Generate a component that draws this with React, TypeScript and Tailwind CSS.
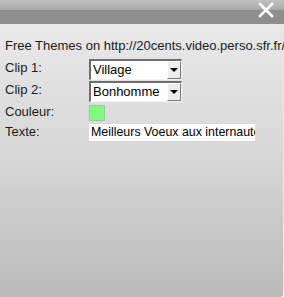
export default function App() {
  const labels = ['Clip 1:', 'Clip 2:', 'Couleur:', 'Texte:']

  return (
    <div
      className="w-[284px] h-[297px] overflow-hidden flex flex-col text-[13px] text-[#1a1a1a]"
      style={{ fontFamily: '"Liberation Sans", Arial, sans-serif' }}
    >
      <div className="h-[24px] flex flex-col relative">
        <div className="h-[10px] bg-gradient-to-b from-[#c2c2c2] to-[#a8a8a8]" />
        <div className="flex-1 bg-[#8e8e8e]" />
        <svg
          className="absolute left-[258px] top-[2px]"
          width="16"
          height="16"
          viewBox="0 0 16 16"
        >
          <path d="M2 2 L14 14 M14 2 L2 14" stroke="#fff" strokeWidth="2.6" strokeLinecap="square" />
        </svg>
      </div>

      <div className="flex-1 bg-gradient-to-b from-[#e9e9e9] via-[#d6d6d6] to-[#bababa] border-r border-r-[#efe6e6] rounded-br-[4px]">
        <div className="pl-[5px] pt-[14px] whitespace-nowrap leading-[15px]">
          Free Themes on http://20cents.video.perso.sfr.fr/
        </div>

        <div className="flex pt-[6px]">
          <div className="w-[89px] pl-[5px] flex flex-col">
            <div className="h-[21px] leading-[18px]">{labels[0]}</div>
            <div className="h-[24px] leading-[19px]">{labels[1]}</div>
            <div className="h-[19px] leading-[16px]">{labels[2]}</div>
            <div className="h-[18px] leading-[17px]">{labels[3]}</div>
          </div>

          <div className="flex flex-col">
            <Combo value="Village" />
            <div className="h-[1px]" />
            <Combo value="Bonhomme" />
            <div className="h-[3px]" />
            <div className="w-[16px] h-[16px] bg-[#7dfb7d] border border-[#9ac79a]" />
            <div className="h-[3px]" />
            <div className="w-[166px] h-[17px] bg-white text-black text-[12.4px] leading-[17px] pl-[2px] whitespace-nowrap overflow-hidden">
              Meilleurs Voeux aux internautes
            </div>
          </div>
        </div>
      </div>
    </div>
  )
}

function Combo({ value }: { value: string }) {
  return (
    <div className="w-[93px] h-[21px] flex bg-white border-t-2 border-l-2 border-t-[#6e6e6e] border-l-[#6e6e6e] border-b border-r border-b-[#f4f4f4] border-r-[#f4f4f4]">
      <div className="flex-1 pl-[2px] text-[13px] leading-[18px] text-black whitespace-nowrap overflow-hidden">
        {value}
      </div>
      <div className="w-[14px] h-full bg-[#ececec] border border-t-white border-l-white border-b-[#7a7a7a] border-r-[#7a7a7a] flex items-center justify-center">
        <svg width="8" height="5" viewBox="0 0 8 5">
          <path d="M0 0 H8 L4 4 Z" fill="#000" />
        </svg>
      </div>
    </div>
  )
}
